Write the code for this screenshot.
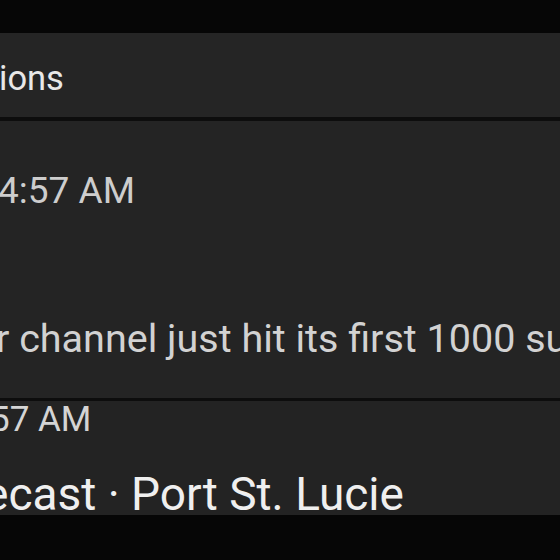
export default function App() {
  return (
    <div className="w-[560px] h-[560px] overflow-hidden bg-[#060606] font-['Roboto',sans-serif] antialiased">
      <div className="h-[33px]" />

      {/* header row */}
      <div className="h-[84px] bg-[#252525] pt-[28px] overflow-hidden">
        <div className="text-[34.5px] leading-none text-[#e8e8e8] whitespace-nowrap -ml-[1px]">ions</div>
      </div>
      <div className="h-[4px] bg-[#0d0d0d]" />

      {/* notification */}
      <div className="h-[277px] bg-[#242424] pt-[51px] overflow-hidden">
        <div className="text-[37px] leading-none text-[#cdcdcd] whitespace-nowrap -ml-[2px]">4:57 AM</div>
        <div className="mt-[110px] text-[39.5px] leading-none text-[#d2d2d2] whitespace-nowrap -ml-[4px]">
          r channel just hit its first 1000 subscribers
        </div>
      </div>
      <div className="h-[3px] bg-[#0d0d0d]" />

      {/* weather */}
      <div className="h-[114px] bg-[#232323] pt-[1px] overflow-hidden">
        <div className="text-[35px] leading-none text-[#d4d4d4] whitespace-nowrap -ml-[10px]">57 AM</div>
        <div className="mt-[34px] text-[46px] leading-none text-[#efefef] whitespace-nowrap -ml-[16px]">
          ecast · Port St. Lucie
        </div>
      </div>
    </div>
  );
}
